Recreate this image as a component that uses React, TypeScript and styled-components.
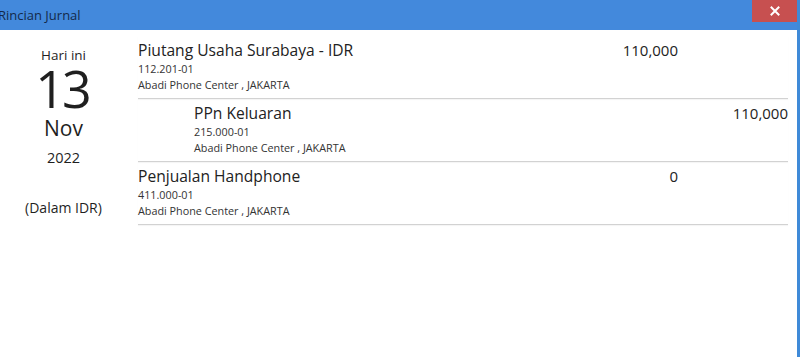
import React from "react";
import styled, { createGlobalStyle } from "styled-components";

const GlobalStyle = createGlobalStyle`
  html, body {
    margin: 0;
    padding: 0;
    background: #ffffff;
  }
  body {
    font-family: "Open Sans", "Noto Sans", sans-serif;
    color: #222;
  }
`;

const Window = styled.div`
  width: 800px;
  height: 357px;
  box-sizing: border-box;
  border-right: 3px solid #3f8ad8;
  background: #fff;
  display: flex;
  flex-direction: column;
  overflow: hidden;
`;

const TitleBar = styled.div`
  height: 30px;
  flex-shrink: 0;
  background: #4389dc;
  display: flex;
  align-items: flex-start;
  justify-content: space-between;
`;

const TitleText = styled.div`
  font-size: 13px;
  color: #14294a;
  margin-left: -2px;
  line-height: 30px;
  white-space: nowrap;
`;

const CloseButton = styled.button`
  width: 45px;
  height: 22px;
  border: none;
  padding: 0;
  background: #c75050;
  color: #fff;
  display: flex;
  align-items: center;
  justify-content: center;
  cursor: pointer;
`;

const Body = styled.div`
  flex: 1;
  display: flex;
`;

const DateColumn = styled.div`
  width: 127px;
  flex-shrink: 0;
  display: flex;
  flex-direction: column;
  align-items: center;
  padding-top: 16px;
`;

const DateLabel = styled.div<{ $size: number; $lh: number; $mt?: number }>`
  font-size: ${(p) => p.$size}px;
  line-height: ${(p) => p.$lh}px;
  height: ${(p) => p.$lh}px;
  margin-top: ${(p) => p.$mt ?? 0}px;
  color: #1f1f1f;
  white-space: nowrap;
`;

const BigDay = styled(DateLabel)`
  letter-spacing: -3px;
  padding-right: 3px;
`;

const List = styled.div`
  flex: 1;
  padding-top: 6px;
  padding-left: 11px;
  padding-right: 9px;
`;

const Row = styled.div<{ $indent: boolean }>`
  display: grid;
  grid-template-columns: 1fr 110px 110px;
  height: 63px;
  box-sizing: border-box;
  border-bottom: 1px solid #d2d2d2;
  box-shadow: 0 1px 1px rgba(0, 0, 0, 0.04);
  padding-left: ${(p) => (p.$indent ? 56 : 0)}px;
`;

const Info = styled.div`
  display: flex;
  flex-direction: column;
  padding-top: 3px;
`;

const AccountName = styled.div`
  font-size: 15.6px;
  line-height: 22px;
  color: #222;
  white-space: nowrap;
`;

const SmallText = styled.div`
  font-size: 10.8px;
  line-height: 16px;
  color: #333;
  white-space: nowrap;
`;

const Amount = styled.div`
  font-size: 15px;
  line-height: 22px;
  text-align: right;
  padding-top: 3px;
  color: #222;
`;

type Entry = {
  name: string;
  code: string;
  place: string;
  debit?: string;
  credit?: string;
  indent?: boolean;
};

const entries: Entry[] = [
  {
    name: "Piutang Usaha Surabaya - IDR",
    code: "112.201-01",
    place: "Abadi Phone Center , JAKARTA",
    debit: "110,000",
  },
  {
    name: "PPn Keluaran",
    code: "215.000-01",
    place: "Abadi Phone Center , JAKARTA",
    credit: "110,000",
    indent: true,
  },
  {
    name: "Penjualan Handphone",
    code: "411.000-01",
    place: "Abadi Phone Center , JAKARTA",
    debit: "0",
  },
];

const App = () => {
  return (
    <>
      <GlobalStyle />
      <Window>
        <TitleBar>
          <TitleText>Rincian Jurnal</TitleText>
          <CloseButton aria-label="Tutup">
            <svg width="10" height="10" viewBox="0 0 10 10">
              <path
                d="M1.5 1.5 L8.5 8.5 M8.5 1.5 L1.5 8.5"
                stroke="#fff"
                strokeWidth="2"
                strokeLinecap="square"
              />
            </svg>
          </CloseButton>
        </TitleBar>
        <Body>
          <DateColumn>
            <DateLabel $size={13.5} $lh={18}>Hari ini</DateLabel>
            <BigDay $size={52} $lh={52} $mt={-2}>13</BigDay>
            <DateLabel $size={21} $lh={24} $mt={2}>Nov</DateLabel>
            <DateLabel $size={14.5} $lh={18} $mt={9}>2022</DateLabel>
            <DateLabel $size={14} $lh={18} $mt={32}>(Dalam IDR)</DateLabel>
          </DateColumn>
          <List>
            {entries.map((e) => (
              <Row key={e.code} $indent={!!e.indent}>
                <Info>
                  <AccountName>{e.name}</AccountName>
                  <SmallText>{e.code}</SmallText>
                  <SmallText>{e.place}</SmallText>
                </Info>
                <Amount>{e.debit ?? ""}</Amount>
                <Amount>{e.credit ?? ""}</Amount>
              </Row>
            ))}
          </List>
        </Body>
      </Window>
    </>
  );
};

export default App;
